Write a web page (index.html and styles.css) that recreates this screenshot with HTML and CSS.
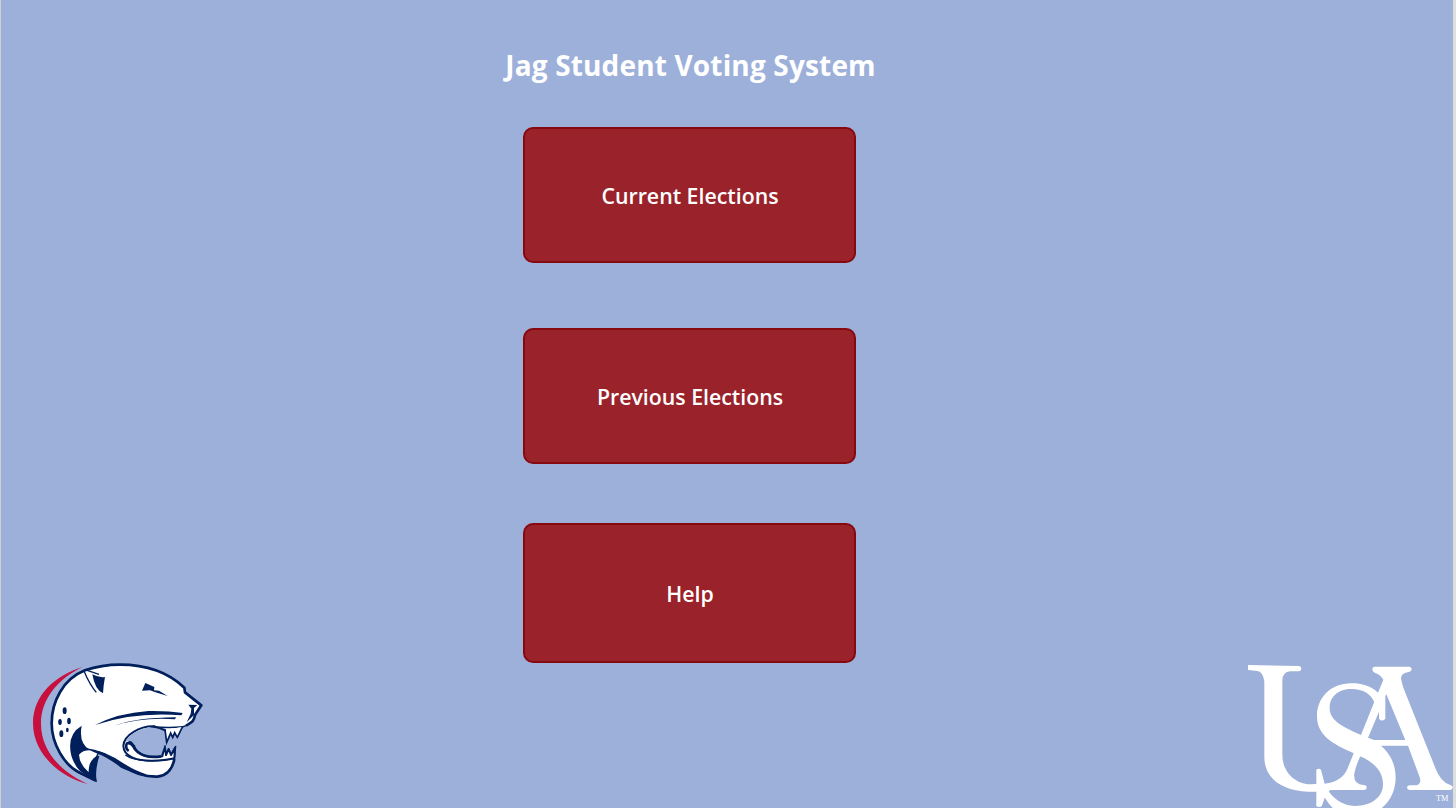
FILE: index.html
```html
<!DOCTYPE html>
<html lang="en">
<head>
<meta charset="utf-8">
<title>Jag Student Voting System</title>
<link rel="stylesheet" href="styles.css">
</head>
<body>
<div class="page">
  <svg class="jaguar" viewBox="0 0 570 405" role="img" aria-label="Jaguars">
    <path class="red" d="M172 36C90 62 24 120 24 205C24 302 112 368 188 387C108 350 48 290 48 205C48 130 102 70 172 36Z"/>
    <path class="head" d="M180 46C114 72 80 140 80 205C80 270 120 330 160 352L212 378C198 352 197 333 213 308L222 291C250 300 265 316 298 335C330 357 365 366 397 365C430 362 444 335 448 312L452 274L438 300L431 282L423 300L417 270L410 300L300 262C310 236 350 217 389 214L420 225L425 262L437 234L443 247L449 233L457 247L472 216L483 212C503 200 506 198 510 180L529 151L480 112L478 98C440 62 380 29 285 29C245 29 215 36 180 45Z"/>
    <path class="outline" d="M212 377L160 351C120 330 80 270 80 205C80 140 114 72 180 46C215 34 245 29 285 29C380 29 440 62 478 98L480 112L529 151L510 180C507 198 503 201 483 212M298 335C330 357 365 366 397 365C430 362 444 335 448 312"/>
    <path class="jaw" d="M389 214C345 212 296 240 295 273C296 305 335 317 380 317Q420 317 448 310L450 278L438 300L431 282L423 300L419 272L412 304C376 310 343 301 328 276Q322 262 312 262Z"/>
    <path class="mouth" d="M386 217C350 217 313 236 302 260Q322 253 330 271C342 300 375 309 408 302L419 270L424 263L420 226Z"/>
    <path class="swirl" d="M304 266Q314 260 324 273C337 301 372 310 408 304M305 266Q300 281 311 288"/>
    <path class="thin" d="M386 215Q430 220 475 215M301 300C325 318 390 324 448 310"/>
    <path class="teeth" d="M420 224L425 262L437 234L443 247L449 233L457 247L472 216"/>
    <path class="navy" d="M375 212L422 222L423 230Q402 220 375 216Z"/>
    <path class="navy" d="M202 58Q222 69 240 66Q235 92 234 115Q210 105 202 58ZM361 84L388 96L387 106L402 107L428 123L389 111L375 106L351 107Z"/>
    <path class="thin" d="M177 48Q194 89 214 112M180 44L222 58"/>
    <path class="navy" d="M210 210Q280 174 370 168Q430 167 473 174L469 181Q330 170 210 210ZM270 212Q330 188 453 187L450 193Q350 186 270 212Z"/>
    <g class="navy"><ellipse cx="119" cy="167" rx="6" ry="10"/><ellipse cx="105" cy="201" rx="5.5" ry="9"/><ellipse cx="132" cy="198" rx="5.5" ry="10"/><ellipse cx="109" cy="236" rx="6" ry="10"/><ellipse cx="127" cy="225" rx="4" ry="7"/>
    <path d="M170 212Q124 239 139 302Q149 333 165 348L216 382Q208 350 223 303Q206 301 194 328Q190 345 191 352Q164 329 162 299Q174 285 196 286Q160 267 170 212Z"/>
    <path d="M178 278Q240 285 300 328Q335 350 368 359Q320 354 288 338Q250 308 218 296ZM490 149L517 150L507 159V180L485 202L497 176L499 161Z"/></g>
  </svg>
  <main class="menu">
    <h1 class="title">Jag Student Voting System</h1>
    <button class="choice">Current Elections</button>
    <button class="choice">Previous Elections</button>
    <button class="choice help">Help</button>
  </main>
  <svg class="usa" viewBox="0 0 648 459" role="img" aria-label="USA">
    <path d="M24 30L178 33Q184 35 184 41Q184 48 177 49H151Q127 51 127 77V300C127 350 165 387 210 388L229 387V344Q237 339 243 344L254 387L270 405L256 424L245 454Q237 458 229 454V410H205C125 408 73 370 73 306V79Q69 51 53 48L24 45Z"/>
    <path fill-rule="evenodd" d="M403 35H509Q516 38 515 43Q514 50 507 51Q483 53 483 71Q487 91 493 106L586 339Q602 382 631 390Q640 393 638 399Q637 405 628 405H508Q501 404 501 397Q501 392 509 391H530Q547 384 538 364L504 272H423L360 305Q346 337 343 355Q339 387 370 390Q380 390 380 397Q380 405 372 405H263L250 387C298 382 314 361 323 340L363 240L403 140L430 74Q420 57 404 53Q397 50 397 43Q397 36 403 35ZM439 118L496 255H402L384 248L417 170V191Q426 202 436 191V123Z"/>
    <path d="M417 116C393 92 365 85 335 85C270 85 230 130 231 185C232 240 275 265 340 294C400 319 429 345 429 388C429 426 395 453 345 453C305 453 278 427 264 406H252V424C275 463 300 485 345 485C415 485 465 440 467 370C467 320 445 292 423 272L385 249L363 240C300 212 269 194 269 158C269 125 295 102 335 102C370 102 393 117 403 142Z"/>
    <text x="588" y="437">TM</text>
  </svg>
</div>
</body>
</html>
```
FILE: styles.css
```css
* { box-sizing: border-box; }
body { margin: 0; font-family: "Open Sans", sans-serif; }
.page {
  display: grid;
  grid-template-columns: 502px 373px 1fr;
  height: 808px;
  overflow: hidden;
  background: #9db0da;
  border-left: 1px solid #d0d0d0;
  border-right: 3px solid #dedede;
}
.jaguar { width: 190px; height: 135px; margin-left: 24px; align-self: end; margin-bottom: 18px; }
.usa { width: 216px; height: 153px; justify-self: end; align-self: end; margin-right: -3px; fill: #fff; }
.usa text { font: 25px "Liberation Serif", serif; }
.red { fill: #c8103e; }
.navy { fill: #001f5b; }
.head { fill: #fff; stroke: #001f5b; stroke-width: 4; stroke-linejoin: round; }
.mouth { fill: #9db0da; }
.outline, .thin, .swirl { fill: none; stroke: #001f5b; stroke-width: 8; stroke-linejoin: round; }
.jaw { fill: #fff; stroke: #001f5b; stroke-width: 6; stroke-linejoin: round; }
.swirl { stroke-width: 8; }
.thin { stroke-width: 4; }
.teeth { fill: #fff; stroke: #001f5b; stroke-width: 5; }
.menu { display: flex; flex-direction: column; align-items: center; color: #fff; }
.title { margin: 45px 0 42px; padding-left: 2px; font-size: 28px; line-height: 40px; font-weight: 700; letter-spacing: 0.16px; white-space: nowrap; }
.choice {
  width: 333px;
  height: 136px;
  flex: none;
  margin: 0 0 65px;
  padding: 0 0 0 1px;
  border: 2px solid #85090f;
  border-radius: 10px;
  background: #9a232b;
  color: #fff;
  font: 600 21.3px "Open Sans", sans-serif;
}
.help { height: 140px; margin-top: -6px; }
```
